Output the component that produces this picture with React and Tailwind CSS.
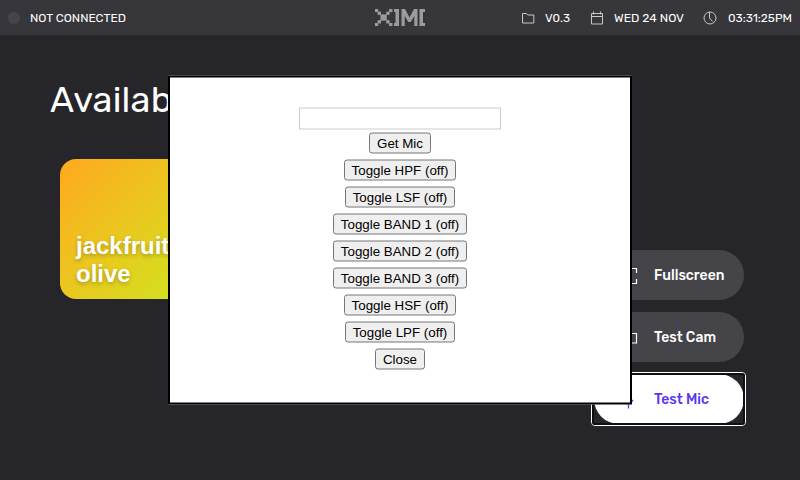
import React from "react";

const filters = ["HPF", "LSF", "BAND 1", "BAND 2", "BAND 3", "HSF", "LPF"];
const widths = {
  HPF: "w-[112px]",
  LSF: "w-[110px]",
  "BAND 1": "w-[134px]",
  "BAND 2": "w-[134px]",
  "BAND 3": "w-[134px]",
  HSF: "w-[112px]",
  LPF: "w-[110px]",
};

function Label({ text, width, y = 14, className = "" }) {
  return (
    <svg width={width} height="20" className={`block shrink-0 overflow-visible ${className}`} fill="currentColor">
      <text x="0" y={y} textLength={width} lengthAdjust="spacingAndGlyphs">{text}</text>
    </svg>
  );
}

function Logo() {
  const cells = [[0, 0], [5, 0], [1, 1], [4, 1], [2, 2], [3, 2], [2, 3], [3, 3], [1, 4], [4, 4], [0, 5], [5, 5]];
  return (
    <svg width="50" height="17" viewBox="0 0 50 17" fill="#9b9a9f">
      {cells.map(([x, y]) => (
        <rect key={`${x}-${y}`} x={x * 2.85 - 0.2} y={y * 2.83 - 0.2} width="3.4" height="3.3" />
      ))}
      <path d="M19 0h5v17h-5v-3h1.5V3H19zM44.5 0h5.5v3h-2v11h2v3h-5.500z" />
      <path d="M26.500 17V0h3.500l4.500 8.500L39 0h3.500v17h-3.200V7l-3.600 6h-2.400L29.700 7v10z" />
    </svg>
  );
}

function FolderIcon() {
  return (
    <svg width="14" height="14" fill="none" stroke="#c8c8ca">
      <path d="M1.500 2.500h4l1.300 1.500h6v8h-11.300z" strokeLinejoin="round" />
    </svg>
  );
}

function CalendarIcon() {
  return (
    <svg width="14" height="14" fill="none" stroke="#c8c8ca">
      <path d="M1.500 2.500h11v10.500h-11zM1.500 5.500h11M3.500 .5v3M10.500 .5v3" />
    </svg>
  );
}

function ClockIcon() {
  return (
    <svg width="14" height="14" fill="none" stroke="#c8c8ca">
      <circle cx="7" cy="7" r="6" />
      <path d="M6.500 1v6l3 3.500" />
    </svg>
  );
}

function DialogButton({ children, className }) {
  return (
    <button className={`h-[21px] rounded-[3px] border border-[#767676] bg-[#efefef] text-[13.333px] leading-[17px] whitespace-nowrap text-black ${className}`}>
      {children}
    </button>
  );
}

export default function App() {
  return (
    <div className="relative flex h-[480px] w-[800px] flex-col overflow-hidden bg-[#26252a] font-[Rubik,Roboto,sans-serif] text-white">
      <header className="grid h-[35px] shrink-0 grid-cols-[375px_50px_1fr] items-center bg-[#37363b] text-[11.5px]">
        <div className="flex items-center gap-[10px] pl-2">
          <span className="size-3 rounded-full bg-[#46454b]" />
          <Label text="NOT CONNECTED" width={96} />
        </div>
        <Logo />
        <div className="flex items-center justify-end pr-2">
          <FolderIcon />
          <Label text="V0.3" width={25} className="ml-[10px]" />
          <span className="ml-5 flex"><CalendarIcon /></span>
          <Label text="WED 24 NOV" width={70} className="ml-[10px]" />
          <span className="ml-[19px] flex"><ClockIcon /></span>
          <Label text="03:31:25PM" width={64} className="ml-[11px]" />
        </div>
      </header>

      <main className="flex flex-1 justify-between pr-14">
        <section className="pt-[45px] pl-[50px]">
          <h1 className="h-[79px] text-[36px] leading-[39px] tracking-[0.2px]">Available</h1>
          <div className="ml-[10px] flex h-[140px] w-[140px] flex-col justify-end rounded-[16px] bg-linear-135 from-[#ffa81f] to-[#cce61f] px-4 pb-[11px] font-['Liberation_Sans',sans-serif] text-[24px] leading-[28px] font-bold text-shadow-[0_2px_4px_rgb(0_0_0/0.25)]">
            <span>jackfruit</span>
            <span>olive</span>
          </div>
        </section>
        <nav className="flex w-[150px] flex-col gap-3 pt-[215px] text-[14.5px] font-medium">
          <button className="flex h-[50px] items-center rounded-full bg-[#454449] pl-6">
            <svg width="20" height="20" fill="none" stroke="white" strokeWidth="1.2">
              <path d="M3 8V3.500h4.500M14 3.500h4.500V8M18.500 14v4.500h-4.500M3 14v4.500h4.500" />
            </svg>
            <Label text="Fullscreen" width={70.5} y={15} className="ml-4" />
          </button>
          <button className="flex h-[50px] items-center rounded-full bg-[#454449] pl-6">
            <svg width="20" height="20" fill="none" stroke="white" strokeWidth="1.2">
              <path d="M2 6.500h11v10h-11zM13 6.500h5.500v9.500h-5.500" />
            </svg>
            <Label text="Test Cam" width={62} y={15} className="ml-4" />
          </button>
          <button className="flex h-[50px] items-center rounded-full bg-white pl-6 text-[#5b35f5]">
            <svg width="20" height="20" fill="none" stroke="currentColor" strokeWidth="1.3">
              <path d="M6 2h6v8H6zM6 12l2 2.500h4l3-3.500M10.500 14.500v5" />
            </svg>
            <Label text="Test Mic" width={55} y={15} className="ml-4" />
          </button>
        </nav>
      </main>

      <div className="pointer-events-none absolute top-[372px] left-[591px] h-[54px] w-[155px] rounded-[4px] border border-white">
        <div className="h-full rounded-[3px] border-2 border-[#101010]" />
      </div>

      <div className="absolute top-[75px] left-[168px] flex h-[329px] w-[464px] translate-y-[0.5px] flex-col items-center border-2 border-black bg-white pt-[30px] font-['Liberation_Sans',sans-serif]">
        <input aria-label="Microphone" className="h-[22px] w-[202px] shrink-0 border border-[#cccccc] bg-white outline-none" />
        <div className="mt-[3px] flex flex-col items-center gap-[6px]">
          <DialogButton className="w-[62px]">Get Mic</DialogButton>
          {filters.map((name) => (
            <DialogButton key={name} className={widths[name]}>Toggle {name} (off)</DialogButton>
          ))}
          <DialogButton className="w-[50px]">Close</DialogButton>
        </div>
      </div>
    </div>
  );
}
